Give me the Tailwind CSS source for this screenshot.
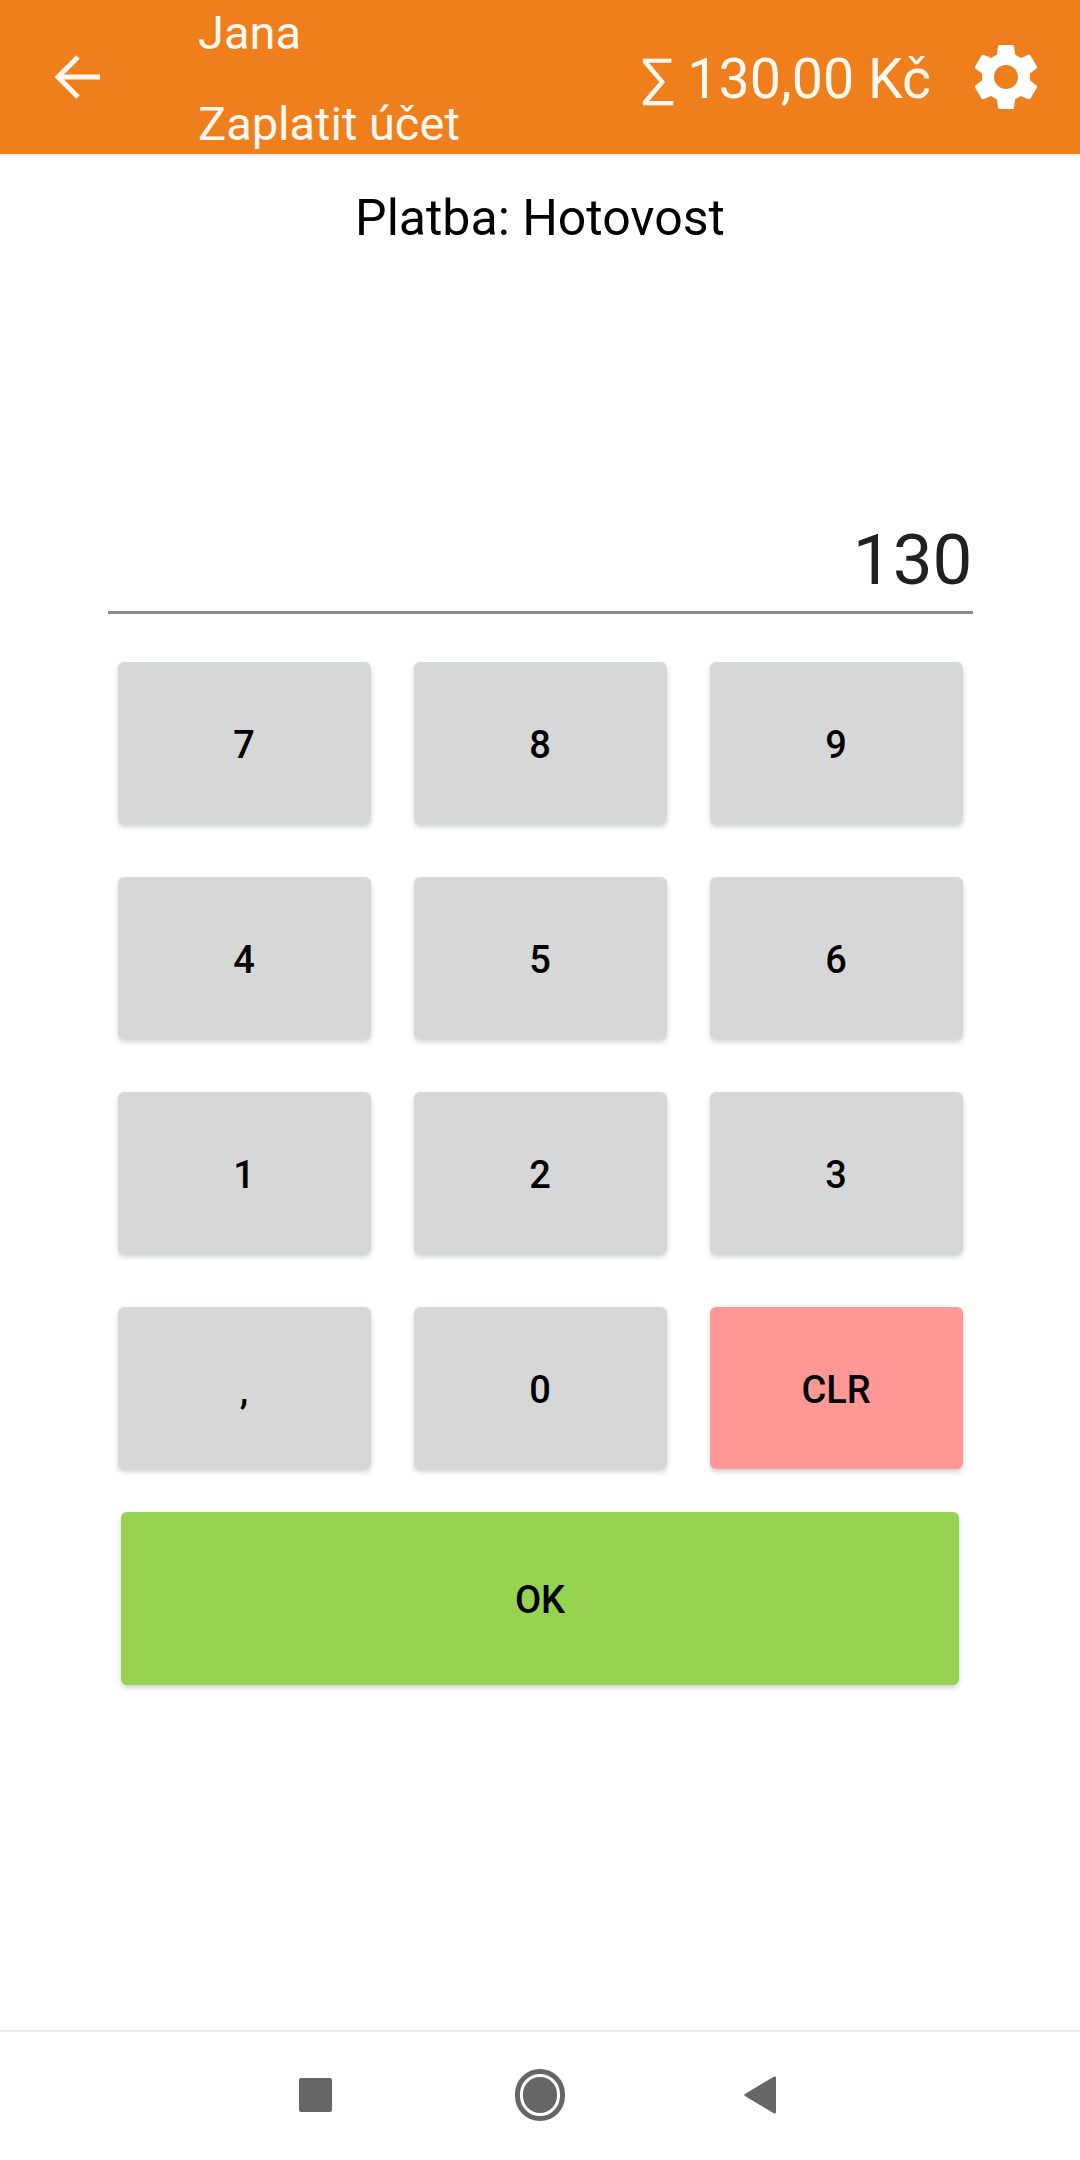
<!DOCTYPE html>
<html lang="cs">
<head>
<meta charset="utf-8">
<script src="https://cdn.jsdelivr.net/npm/@tailwindcss/browser@4"></script>
</head>
<body class="bg-white">
<div class="w-[1080px] h-[2160px] flex flex-col bg-white font-['Roboto',sans-serif] overflow-hidden">
  <header class="h-[154px] shrink-0 bg-[#ef7f1c] text-[#fff8f0] flex items-center shadow-[0_1px_4px_rgba(0,0,0,0.15)] relative">
    <div class="w-[198px] shrink-0 pl-[53px]">
      <svg class="block w-[48px] h-[48px]" viewBox="0 0 48 48" fill="none" stroke="#fff8f0" stroke-width="5"><path d="M47 24H6M25 4L5 24l20 20"/></svg>
    </div>
    <div class="flex flex-col h-full justify-between pt-[3px] text-[47px] leading-[60px] w-[435px] shrink-0">
      <div>Jana</div>
      <div class="whitespace-nowrap">Zaplatit účet</div>
    </div>
    <div class="text-[55.5px] leading-[60px] whitespace-nowrap w-[334px] shrink-0 mt-[6px] pl-[8px]">∑ 130,00 Kč</div>
    <svg class="block w-[80px] h-[80px] shrink-0 -ml-[1px]" viewBox="0 0 24 24" fill="#ffffff"><path d="M19.14 12.94c.04-.3.06-.61.06-.94 0-.32-.02-.64-.07-.94l2.03-1.58c.18-.14.23-.41.12-.61l-1.92-3.32c-.12-.22-.37-.29-.59-.22l-2.39.96c-.5-.38-1.03-.7-1.62-.94l-.36-2.54c-.04-.24-.24-.41-.48-.41h-3.84c-.24 0-.43.17-.47.41l-.36 2.54c-.59.24-1.13.57-1.62.94l-2.39-.96c-.22-.08-.47 0-.59.22L2.74 8.87c-.12.21-.08.47.12.61l2.03 1.58c-.05.3-.09.63-.09.94s.02.64.07.94l-2.03 1.58c-.18.14-.23.41-.12.61l1.92 3.32c.12.22.37.29.59.22l2.39-.96c.5.38 1.03.7 1.62.94l.36 2.54c.05.24.24.41.48.41h3.84c.24 0 .44-.17.47-.41l.36-2.54c.59-.24 1.13-.56 1.62-.94l2.39.96c.22.08.47 0 .59-.22l1.92-3.32c.12-.22.07-.47-.12-.61l-2.01-1.58zM12 15.6c-1.98 0-3.6-1.62-3.6-3.6s1.62-3.6 3.6-3.6 3.6 1.62 3.6 3.6-1.62 3.6-3.6 3.6z"/></svg>
  </header>

  <main class="flex-1 flex flex-col items-center">
    <div class="mt-[34px] text-[50px] leading-[60px] text-black whitespace-nowrap">Platba: Hotovost</div>
    <div class="mt-[270px] w-[865px] h-[96px] border-b-[3px] border-[#8a8a8a] text-right text-[71px] leading-[84px] text-[#212121]">130</div>

    <div class="mt-[48px] w-[845px] grid grid-cols-3 gap-x-[43px] gap-y-[53px] text-[38px] font-medium text-black">
      <button class="h-[162px] pt-[5px] rounded-[6px] bg-[#d6d8d7] shadow-[0_3px_5px_rgba(0,0,0,0.18)]">7</button>
      <button class="h-[162px] pt-[5px] rounded-[6px] bg-[#d6d8d7] shadow-[0_3px_5px_rgba(0,0,0,0.18)]">8</button>
      <button class="h-[162px] pt-[5px] rounded-[6px] bg-[#d6d8d7] shadow-[0_3px_5px_rgba(0,0,0,0.18)]">9</button>
      <button class="h-[162px] pt-[5px] rounded-[6px] bg-[#d6d8d7] shadow-[0_3px_5px_rgba(0,0,0,0.18)]">4</button>
      <button class="h-[162px] pt-[5px] rounded-[6px] bg-[#d6d8d7] shadow-[0_3px_5px_rgba(0,0,0,0.18)]">5</button>
      <button class="h-[162px] pt-[5px] rounded-[6px] bg-[#d6d8d7] shadow-[0_3px_5px_rgba(0,0,0,0.18)]">6</button>
      <button class="h-[162px] pt-[5px] rounded-[6px] bg-[#d6d8d7] shadow-[0_3px_5px_rgba(0,0,0,0.18)]">1</button>
      <button class="h-[162px] pt-[5px] rounded-[6px] bg-[#d6d8d7] shadow-[0_3px_5px_rgba(0,0,0,0.18)]">2</button>
      <button class="h-[162px] pt-[5px] rounded-[6px] bg-[#d6d8d7] shadow-[0_3px_5px_rgba(0,0,0,0.18)]">3</button>
      <button class="h-[162px] pt-[5px] rounded-[6px] bg-[#d6d8d7] shadow-[0_3px_5px_rgba(0,0,0,0.18)]">,</button>
      <button class="h-[162px] pt-[5px] rounded-[6px] bg-[#d6d8d7] shadow-[0_3px_5px_rgba(0,0,0,0.18)]">0</button>
      <button class="h-[162px] pt-[5px] rounded-[6px] bg-[#ff9797] shadow-[0_3px_5px_rgba(0,0,0,0.18)]">CLR</button>
    </div>

    <button class="mt-[43px] w-[838px] h-[173px] pt-[4px] rounded-[6px] bg-[#95d351] shadow-[0_3px_5px_rgba(0,0,0,0.18)] text-[38px] font-medium text-black">OK</button>
  </main>

  <nav class="h-[130px] shrink-0 border-t-2 border-[#e8e8e8] flex items-center pb-[3px] relative">
    <div class="w-[299px] shrink-0"></div>
    <div class="w-[33px] h-[34px] rounded-[2px] bg-[#666666] shrink-0"></div>
    <div class="w-[183px] shrink-0"></div>
    <div class="w-[50px] h-[52px] rounded-full border-[5px] border-[#666666] p-[3px] shrink-0">
      <div class="w-full h-full rounded-full bg-[#666666]"></div>
    </div>
    <div class="w-[179px] shrink-0"></div>
    <svg class="block w-[32px] h-[40px] shrink-0" viewBox="0 0 34 38" preserveAspectRatio="none" fill="#666666"><path d="M32 1.5c1 -.5 2 0 2 1.500V35c0 1.500 -1 2 -2 1.500L1 20c-1 -.6 -1 -1.400 0 -2z"/></svg>
  </nav>
</div>
</body>
</html>
